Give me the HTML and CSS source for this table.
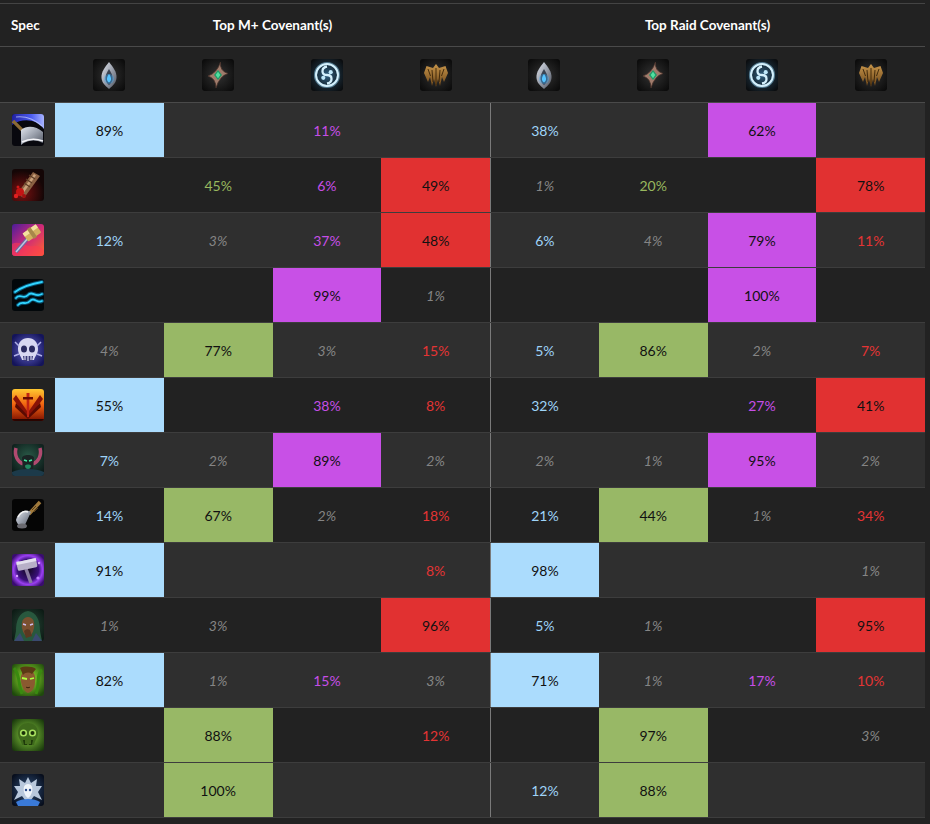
FILE: index.html
```html
<!DOCTYPE html>
<html>
<head>
<meta charset="utf-8">
<link rel="stylesheet" href="styles.css">
</head>
<body>
<svg class="defs" width="0" height="0" aria-hidden="true">
  <defs>
    <radialGradient id="vig" cx="50%" cy="50%" r="65%">
      <stop offset="0" stop-color="#323232"/><stop offset="1" stop-color="#0b0b0b"/>
    </radialGradient>
    <radialGradient id="vigBlue" cx="50%" cy="50%" r="65%">
      <stop offset="0" stop-color="#2f5f80"/><stop offset=".6" stop-color="#16242e"/><stop offset="1" stop-color="#0a0c0e"/>
    </radialGradient>
    <linearGradient id="silver" x1="0" y1="0" x2="1" y2="1">
      <stop offset="0" stop-color="#e2e6ee"/><stop offset=".5" stop-color="#9aa0ac"/><stop offset="1" stop-color="#4f5460"/>
    </linearGradient>
    <linearGradient id="gold" x1="0" y1="0" x2="0" y2="1">
      <stop offset="0" stop-color="#c8964a"/><stop offset="1" stop-color="#6a4418"/>
    </linearGradient>
    <linearGradient id="blueSweep" x1="0" y1="0" x2="1" y2="0">
      <stop offset="0" stop-color="#2020a0"/><stop offset=".6" stop-color="#4c5cf0"/><stop offset="1" stop-color="#a8b4ff"/>
    </linearGradient>
    <radialGradient id="bloodBg" cx="30%" cy="75%" r="70%">
      <stop offset="0" stop-color="#7a1010"/><stop offset="1" stop-color="#140606"/>
    </radialGradient>
    <linearGradient id="retBg" x1="0" y1="0" x2="1" y2="1">
      <stop offset="0" stop-color="#4a1c9a"/><stop offset=".5" stop-color="#d02a78"/><stop offset="1" stop-color="#ff6a2a"/>
    </linearGradient>
    <radialGradient id="skullBg" cx="50%" cy="50%" r="60%">
      <stop offset="0" stop-color="#6a6ad0"/><stop offset="1" stop-color="#14145a"/>
    </radialGradient>
    <linearGradient id="fireBg" x1="0" y1="0" x2="0" y2="1">
      <stop offset="0" stop-color="#ffc830"/><stop offset=".5" stop-color="#f06010"/><stop offset="1" stop-color="#7a1000"/>
    </linearGradient>
    <radialGradient id="ringBg" cx="50%" cy="50%" r="60%">
      <stop offset="0" stop-color="#12081e"/><stop offset=".55" stop-color="#3a107a"/><stop offset=".75" stop-color="#9a40f0"/><stop offset="1" stop-color="#3a0c70"/>
    </radialGradient>
    <radialGradient id="elfBg" cx="50%" cy="45%" r="65%">
      <stop offset="0" stop-color="#9af030"/><stop offset="1" stop-color="#1f4a0c"/>
    </radialGradient>
    <radialGradient id="plagueBg" cx="50%" cy="50%" r="65%">
      <stop offset="0" stop-color="#8ad040"/><stop offset="1" stop-color="#1a3a0c"/>
    </radialGradient>
    <radialGradient id="frostBg" cx="50%" cy="50%" r="65%">
      <stop offset="0" stop-color="#30507a"/><stop offset="1" stop-color="#060c1a"/>
    </radialGradient>
    <radialGradient id="hoodBg" cx="50%" cy="50%" r="65%">
      <stop offset="0" stop-color="#2a4a3a"/><stop offset="1" stop-color="#0c1a14"/>
    </radialGradient>
    <radialGradient id="demonBg" cx="50%" cy="40%" r="65%">
      <stop offset="0" stop-color="#2a5a48"/><stop offset="1" stop-color="#0c1a18"/>
    </radialGradient>
  </defs>
</svg>

<div class="table">
  <div class="head">
    <div class="spec">Spec</div>
    <div class="grp">Top M+ Covenant(s)</div>
    <div class="grp">Top Raid Covenant(s)</div>
  </div>

  <div class="icons">
    <div></div>
    <div><svg class="ico" viewBox="0 0 32 32"><rect width="32" height="32" fill="url(#vig)"/><path d="M16 3C20 8 24 13 23.5 19C23 24 19.5 27 16 30C12.5 27 9 24 8.5 19C8 13 12 8 16 3Z" fill="url(#silver)"/><path d="M16 10C18.3 13.5 20 17 19.5 20.5C19 23.3 17.5 24.8 16 26C14.5 24.8 13 23.3 12.5 20.5C12 17 13.7 13.5 16 10Z" fill="#3a4352"/><circle cx="16" cy="20" r="5" fill="#3ab0ff" opacity=".35"/><path d="M16 15C17.5 17.3 18.3 19 18 20.7C17.6 22.2 16.8 22.9 16 23.5C15.2 22.9 14.4 22.2 14 20.7C13.7 19 14.5 17.3 16 15Z" fill="#56c4ff"/></svg></div>
    <div><svg class="ico" viewBox="0 0 32 32"><rect width="32" height="32" fill="url(#vig)"/><path d="M18.5 3Q17.5 12 26 14.5Q17.5 17 14 29Q14 19.5 6 17Q15 14 18.5 3Z" fill="#a07c6c" stroke="#4a342c" stroke-width=".8"/><path d="M16 11L20 16L16 21L12 16Z" fill="#1e9a68"/><path d="M16 12.8L18.3 16L16 19.2L13.7 16Z" fill="#52e0a0"/></svg></div>
    <div><svg class="ico" viewBox="0 0 32 32"><rect width="32" height="32" fill="url(#vigBlue)"/><circle cx="16" cy="16" r="11.5" fill="none" stroke="#8fd0f0" stroke-width="3.2" opacity=".5"/><circle cx="16" cy="16" r="11" fill="none" stroke="#d4f0fc" stroke-width="1.9"/><path d="M16 7.5C10 8.5 10 16 16 16C22 16 22 23.5 16 24.5" fill="none" stroke="#d4f0fc" stroke-width="2.3"/><circle cx="12.3" cy="18.8" r="2.1" fill="#bfe8fa"/><circle cx="19.7" cy="13.2" r="2.1" fill="#bfe8fa"/></svg></div>
    <div><svg class="ico" viewBox="0 0 32 32"><rect width="32" height="32" fill="url(#vig)"/><path d="M16 5L19 9L25.5 7L28 14L24 23L22 18L20 27L18 20L16 28L14 20L12 27L10 18L8 23L4 14L6.5 7L13 9Z" fill="url(#gold)"/><path d="M16 9V26M12 11L13 23M20 11L19 23M8 10L10.5 17M24 10L21.5 17" stroke="#3a2408" stroke-width=".9"/></svg></div>
    <div><svg class="ico" viewBox="0 0 32 32"><rect width="32" height="32" fill="url(#vig)"/><path d="M16 3C20 8 24 13 23.5 19C23 24 19.5 27 16 30C12.5 27 9 24 8.5 19C8 13 12 8 16 3Z" fill="url(#silver)"/><path d="M16 10C18.3 13.5 20 17 19.5 20.5C19 23.3 17.5 24.8 16 26C14.5 24.8 13 23.3 12.5 20.5C12 17 13.7 13.5 16 10Z" fill="#3a4352"/><circle cx="16" cy="20" r="5" fill="#3ab0ff" opacity=".35"/><path d="M16 15C17.5 17.3 18.3 19 18 20.7C17.6 22.2 16.8 22.9 16 23.5C15.2 22.9 14.4 22.2 14 20.7C13.7 19 14.5 17.3 16 15Z" fill="#56c4ff"/></svg></div>
    <div><svg class="ico" viewBox="0 0 32 32"><rect width="32" height="32" fill="url(#vig)"/><path d="M18.5 3Q17.5 12 26 14.5Q17.5 17 14 29Q14 19.5 6 17Q15 14 18.5 3Z" fill="#a07c6c" stroke="#4a342c" stroke-width=".8"/><path d="M16 11L20 16L16 21L12 16Z" fill="#1e9a68"/><path d="M16 12.8L18.3 16L16 19.2L13.7 16Z" fill="#52e0a0"/></svg></div>
    <div><svg class="ico" viewBox="0 0 32 32"><rect width="32" height="32" fill="url(#vigBlue)"/><circle cx="16" cy="16" r="11.5" fill="none" stroke="#8fd0f0" stroke-width="3.2" opacity=".5"/><circle cx="16" cy="16" r="11" fill="none" stroke="#d4f0fc" stroke-width="1.9"/><path d="M16 7.5C10 8.5 10 16 16 16C22 16 22 23.5 16 24.5" fill="none" stroke="#d4f0fc" stroke-width="2.3"/><circle cx="12.3" cy="18.8" r="2.1" fill="#bfe8fa"/><circle cx="19.7" cy="13.2" r="2.1" fill="#bfe8fa"/></svg></div>
    <div><svg class="ico" viewBox="0 0 32 32"><rect width="32" height="32" fill="url(#vig)"/><path d="M16 5L19 9L25.5 7L28 14L24 23L22 18L20 27L18 20L16 28L14 20L12 27L10 18L8 23L4 14L6.5 7L13 9Z" fill="url(#gold)"/><path d="M16 9V26M12 11L13 23M20 11L19 23M8 10L10.5 17M24 10L21.5 17" stroke="#3a2408" stroke-width=".9"/></svg></div>
  </div>

  <div class="rows">
    <!-- 1 -->
    <div class="row alt">
      <div class="spec-ico"><svg class="ico" viewBox="0 0 32 32"><rect width="32" height="32" fill="#08080e"/><path d="M0 0H32V15C25 6 12 3 0 11Z" fill="url(#blueSweep)"/><path d="M4 3C12 2 22 5 30 12" stroke="#c8d0ff" stroke-width="1.2" fill="none" opacity=".7"/><path d="M1 7L15 21" stroke="#8a6a34" stroke-width="3.2"/><path d="M9 16C15 11 24 12 31 18V29C23 25 15 26 9 31Z" fill="url(#silver)"/><path d="M10 28C16 25 23 24 31 27" stroke="#f4f4f8" stroke-width="1.4" fill="none"/></svg></div>
      <div class="cell c1 top">89%</div><div class="cell"></div><div class="cell c3">11%</div><div class="cell"></div>
      <div class="cell sep c1">38%</div><div class="cell"></div><div class="cell c3 top">62%</div><div class="cell"></div>
    </div>
    <!-- 2 -->
    <div class="row">
      <div class="spec-ico"><svg class="ico" viewBox="0 0 32 32"><rect width="32" height="32" fill="url(#bloodBg)"/><path d="M5 25L21 3L28 7L12 29Z" fill="#8a6042"/><path d="M8 24L22 5L24 6.5L10 26Z" fill="#c8a07a"/><path d="M14 10L20 14M12 14L18 18M17 6L23 10" stroke="#5a3a24" stroke-width="1.2"/><circle cx="8" cy="23" r="4" fill="#c41414"/><circle cx="4" cy="27" r="2.2" fill="#e02020"/><circle cx="12" cy="27" r="2" fill="#a01010"/><circle cx="6" cy="18" r="1.5" fill="#d01818"/></svg></div>
      <div class="cell"></div><div class="cell c2">45%</div><div class="cell c3">6%</div><div class="cell c4 top">49%</div>
      <div class="cell sep low">1%</div><div class="cell c2">20%</div><div class="cell"></div><div class="cell c4 top">78%</div>
    </div>
    <!-- 3 -->
    <div class="row alt">
      <div class="spec-ico"><svg class="ico" viewBox="0 0 32 32"><rect width="32" height="32" fill="url(#retBg)"/><path d="M0 20C8 16 14 24 22 22C26 21 30 24 32 26V32H0Z" fill="#ff3a50" opacity=".55"/><path d="M17 13L4 28" stroke="#6a6aa0" stroke-width="3.5"/><path d="M17 13L4 28" stroke="#c0c4e0" stroke-width="1.5"/><g transform="rotate(-35 20 9)"><rect x="12" y="4" width="16" height="10" rx="1.5" fill="#d4b060"/><rect x="12" y="4" width="16" height="4" fill="#f4e0a0"/><rect x="18" y="3" width="4" height="12" fill="#a8884a"/></g></svg></div>
      <div class="cell c1">12%</div><div class="cell low">3%</div><div class="cell c3">37%</div><div class="cell c4 top">48%</div>
      <div class="cell sep c1">6%</div><div class="cell low">4%</div><div class="cell c3 top">79%</div><div class="cell c4">11%</div>
    </div>
    <!-- 4 -->
    <div class="row">
      <div class="spec-ico"><svg class="ico" viewBox="0 0 32 32"><rect width="32" height="32" fill="#02070a"/><g fill="none" stroke-linecap="round"><path d="M3 13C10 8 18 5 30 3M4 19C8 14 12 21 16 16C20 11 23 19 30 15M6 26C10 21 14 27 18 22C22 17 25 25 30 22" stroke="#0a7aa8" stroke-width="4" opacity=".6"/><path d="M3 13C10 8 18 5 30 3M4 19C8 14 12 21 16 16C20 11 23 19 30 15M6 26C10 21 14 27 18 22C22 17 25 25 30 22" stroke="#30d4ff" stroke-width="1.8"/></g></svg></div>
      <div class="cell"></div><div class="cell"></div><div class="cell c3 top">99%</div><div class="cell low">1%</div>
      <div class="cell sep"></div><div class="cell"></div><div class="cell c3 top">100%</div><div class="cell"></div>
    </div>
    <!-- 5 -->
    <div class="row alt">
      <div class="spec-ico"><svg class="ico" viewBox="0 0 32 32"><rect width="32" height="32" fill="url(#skullBg)"/><path d="M6 15C6 8 10 4 16 4C22 4 26 8 26 15C26 20 23 22 22 26H10C9 22 6 20 6 15Z" fill="#d8d8f2"/><ellipse cx="12" cy="15" rx="3" ry="3.5" fill="#2a2a60"/><ellipse cx="20" cy="15" rx="3" ry="3.5" fill="#2a2a60"/><path d="M11 22H21L20 27H12Z" fill="#3a3a78"/><path d="M13 22V26M16 22V27M19 22V26" stroke="#d8d8f2" stroke-width="1.2"/><path d="M3 8L7 12M29 8L25 12M2 22L7 20M30 22L25 20" stroke="#b0b0e8" stroke-width="1.5"/></svg></div>
      <div class="cell low">4%</div><div class="cell c2 top">77%</div><div class="cell low">3%</div><div class="cell c4">15%</div>
      <div class="cell sep c1">5%</div><div class="cell c2 top">86%</div><div class="cell low">2%</div><div class="cell c4">7%</div>
    </div>
    <!-- 6 -->
    <div class="row">
      <div class="spec-ico"><svg class="ico" viewBox="0 0 32 32"><rect width="32" height="32" fill="url(#fireBg)"/><path d="M16 30L1 10L4 6L15 22Z" fill="#8a1206"/><path d="M16 30L31 10L28 6L17 22Z" fill="#8a1206"/><path d="M16 30L3 18L4 14L15 26Z" fill="#5a0a02"/><path d="M16 30L29 18L28 14L17 26Z" fill="#5a0a02"/><path d="M14.5 4H17.5L17 28H15Z" fill="#c02412"/><rect x="11" y="8" width="10" height="2.5" fill="#6a0a02"/><path d="M0 30L32 30V32H0Z" fill="#2a0400"/></svg></div>
      <div class="cell c1 top">55%</div><div class="cell"></div><div class="cell c3">38%</div><div class="cell c4">8%</div>
      <div class="cell sep c1">32%</div><div class="cell"></div><div class="cell c3">27%</div><div class="cell c4 top">41%</div>
    </div>
    <!-- 7 -->
    <div class="row alt">
      <div class="spec-ico"><svg class="ico" viewBox="0 0 32 32"><rect width="32" height="32" fill="url(#demonBg)"/><path d="M4 4C2 12 6 18 11 20M28 4C30 12 26 18 21 20" stroke="#b04a70" stroke-width="3.5" fill="none"/><path d="M10 14C10 10 22 10 22 14L21 26C19 29 13 29 11 26Z" fill="#1a2424"/><path d="M12 16L15 17M20 16L17 17" stroke="#40e8a0" stroke-width="1.6"/><path d="M13 22C13 20 19 20 19 22C19 26 13 26 13 22Z" fill="#208a60"/><path d="M0 28C8 24 24 24 32 28V32H0Z" fill="#1c3a4a"/></svg></div>
      <div class="cell c1">7%</div><div class="cell low">2%</div><div class="cell c3 top">89%</div><div class="cell low">2%</div>
      <div class="cell sep low">2%</div><div class="cell low">1%</div><div class="cell c3 top">95%</div><div class="cell low">2%</div>
    </div>
    <!-- 8 -->
    <div class="row">
      <div class="spec-ico"><svg class="ico" viewBox="0 0 32 32"><rect width="32" height="32" fill="#050505"/><path d="M17 15L28 3" stroke="#a07a3c" stroke-width="3.5"/><path d="M20 11L24 7M22 13L26 9" stroke="#5a401a" stroke-width="1"/><path d="M4 21C6 13 13 9 19 13L12 28C8 28 5 25 4 21Z" fill="url(#silver)"/><ellipse cx="10" cy="27" rx="5" ry="2.5" fill="#6a6a70"/><path d="M6 18C9 13 13 12 16 13" stroke="#f2f2f2" stroke-width="1.5" fill="none"/></svg></div>
      <div class="cell c1">14%</div><div class="cell c2 top">67%</div><div class="cell low">2%</div><div class="cell c4">18%</div>
      <div class="cell sep c1">21%</div><div class="cell c2 top">44%</div><div class="cell low">1%</div><div class="cell c4">34%</div>
    </div>
    <!-- 9 -->
    <div class="row alt">
      <div class="spec-ico"><svg class="ico" viewBox="0 0 32 32"><rect width="32" height="32" fill="url(#ringBg)"/><circle cx="6" cy="8" r="1.6" fill="#c080ff"/><circle cx="26" cy="24" r="1.6" fill="#c080ff"/><circle cx="5" cy="22" r="1.2" fill="#d8a0ff"/><circle cx="27" cy="9" r="1.2" fill="#d8a0ff"/><path d="M14 15L19 29" stroke="#8a7aa0" stroke-width="3.5"/><g transform="rotate(-12 15 11)"><rect x="5" y="6" width="20" height="9" rx="1.5" fill="#b8b0c8"/><rect x="5" y="6" width="20" height="3" fill="#e4e0ee"/></g></svg></div>
      <div class="cell c1 top">91%</div><div class="cell"></div><div class="cell"></div><div class="cell c4">8%</div>
      <div class="cell sep c1 top">98%</div><div class="cell"></div><div class="cell"></div><div class="cell low">1%</div>
    </div>
    <!-- 10 -->
    <div class="row">
      <div class="spec-ico"><svg class="ico" viewBox="0 0 32 32"><rect width="32" height="32" fill="url(#hoodBg)"/><path d="M16 2C7 3 4 12 4 22L2 32H30L28 22C28 12 25 3 16 2Z" fill="#28583e"/><path d="M16 8C11 8 9 13 10 19C11 24 13 27 16 28C19 27 21 24 22 19C23 13 21 8 16 8Z" fill="#7a5030"/><path d="M11 15L14 16M21 15L18 16" stroke="#d0c0f0" stroke-width="1.4"/><path d="M12 22C14 20 16 20 18 21L20 27L14 29Z" fill="#5a3820"/><path d="M2 32L8 24L12 32ZM30 32L24 24L20 32Z" fill="#3a4a70"/></svg></div>
      <div class="cell low">1%</div><div class="cell low">3%</div><div class="cell"></div><div class="cell c4 top">96%</div>
      <div class="cell sep c1">5%</div><div class="cell low">1%</div><div class="cell"></div><div class="cell c4 top">95%</div>
    </div>
    <!-- 11 -->
    <div class="row alt">
      <div class="spec-ico"><svg class="ico" viewBox="0 0 32 32"><rect width="32" height="32" fill="url(#elfBg)"/><path d="M2 4C8 10 6 20 10 30M30 6C24 10 28 20 24 30" stroke="#3a8a10" stroke-width="3" fill="none"/><path d="M16 6C10 6 8 12 9 18C10 24 13 28 16 29C20 28 23 24 23 18C24 12 22 6 16 6Z" fill="#8a5a30"/><path d="M10 14L15 15M22 14L18 15" stroke="#b0ff40" stroke-width="1.8"/><path d="M8 4C12 2 20 2 24 5L20 10C17 8 14 8 11 11Z" fill="#5a3a14"/><path d="M14 23C15 24 17 24 18 23" stroke="#4a2a10" stroke-width="1"/></svg></div>
      <div class="cell c1 top">82%</div><div class="cell low">1%</div><div class="cell c3">15%</div><div class="cell low">3%</div>
      <div class="cell sep c1 top">71%</div><div class="cell low">1%</div><div class="cell c3">17%</div><div class="cell c4">10%</div>
    </div>
    <!-- 12 -->
    <div class="row">
      <div class="spec-ico"><svg class="ico" viewBox="0 0 32 32"><rect width="32" height="32" fill="url(#plagueBg)"/><path d="M6 14C6 7 11 4 16 4C21 4 26 7 26 14C26 19 23 21 22 26H10C9 21 6 19 6 14Z" fill="#3f6a1c"/><circle cx="11.5" cy="14" r="3.6" fill="#a8e060"/><circle cx="20.5" cy="14" r="3.6" fill="#a8e060"/><circle cx="11.5" cy="14" r="2" fill="#1a3008"/><circle cx="20.5" cy="14" r="2" fill="#1a3008"/><path d="M11 21H21L20 26H12Z" fill="#1e3a0a"/><path d="M14 21V25M16 21V26M18 21V25" stroke="#6aa030" stroke-width="1"/></svg></div>
      <div class="cell"></div><div class="cell c2 top">88%</div><div class="cell"></div><div class="cell c4">12%</div>
      <div class="cell sep"></div><div class="cell c2 top">97%</div><div class="cell"></div><div class="cell low">3%</div>
    </div>
    <!-- 13 -->
    <div class="row alt">
      <div class="spec-ico"><svg class="ico" viewBox="0 0 32 32"><rect width="32" height="32" fill="url(#frostBg)"/><path d="M16 3L19 9L25 5L24 12L30 12L26 18L30 26L22 22L16 30L10 22L2 26L6 18L2 12L8 12L7 5L13 9Z" fill="#b8c8dc"/><path d="M16 10C12 10 11 14 12 18C13 21 14 23 16 24C18 23 19 21 20 18C21 14 20 10 16 10Z" fill="#eef4fa"/><circle cx="14" cy="16" r="1.2" fill="#2a4a8a"/><circle cx="18" cy="16" r="1.2" fill="#2a4a8a"/><path d="M4 28C10 24 22 24 28 28L26 32H6Z" fill="#3a7ad8"/></svg></div>
      <div class="cell"></div><div class="cell c2 top">100%</div><div class="cell"></div><div class="cell"></div>
      <div class="cell sep c1">12%</div><div class="cell c2 top">88%</div><div class="cell"></div><div class="cell"></div>
    </div>
  </div>
</div>
</body>
</html>
```

FILE: styles.css
```css
* { box-sizing: border-box; }

body {
  margin: 0;
  background: #222222;
  font-family: Lato, "Open Sans", "Liberation Sans", sans-serif;
  color: #e0e0e0;
}

.defs {
  display: block;
  width: 0;
  height: 0;
  overflow: hidden;
}

.table {
  width: 925px;
  margin-top: 3px;
  border-top: 1px solid #444444;
}

.head {
  display: grid;
  grid-template-columns: 55px 1fr 1fr;
  align-items: center;
  height: 43px;
  border-bottom: 1px solid #4a4a4a;
  font-size: 13.5px;
  font-weight: 700;
  color: #ffffff;
}

.head .spec {
  padding-left: 11px;
}

.head .grp {
  text-align: center;
}

.icons {
  display: grid;
  grid-template-columns: 55px repeat(8, 1fr);
  height: 56px;
  border-bottom: 1px solid #4a4a4a;
}

.icons > div {
  display: flex;
  align-items: center;
  justify-content: center;
}

.ico {
  display: block;
  width: 32px;
  height: 32px;
  border-radius: 3px;
}

.row {
  display: grid;
  grid-template-columns: 55px repeat(8, 1fr);
  height: 55px;
  border-bottom: 1px solid #3d3d3d;
}

.row.alt {
  background: #2f2f2f;
}

.spec-ico {
  display: flex;
  align-items: center;
  justify-content: center;
}

.cell {
  display: flex;
  align-items: center;
  justify-content: center;
  font-size: 14px;
}

.cell.sep {
  border-left: 1px solid #7a7a7a;
}

.c1 { color: #9fd4f8; }
.c2 { color: #98b85e; }
.c3 { color: #c64ee6; }
.c4 { color: #e43434; }

.low {
  color: #858585;
  font-style: italic;
}

.cell.top {
  color: #111111;
}
.c1.top { background: #abdcfd; }
.c2.top { background: #98b866; }
.c3.top { background: #c850e6; }
.c4.top { background: #e13131; }
```
